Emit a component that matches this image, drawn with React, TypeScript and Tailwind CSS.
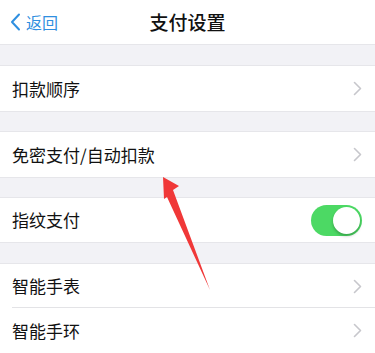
import React from "react";

const Chevron = () => (
  <svg width="9" height="15" viewBox="0 0 9 15" className="shrink-0">
    <path d="M1.5 1.5 L7.5 7.5 L1.5 13.5" fill="none" stroke="#c7c7cc" strokeWidth="1.6" strokeLinecap="round" strokeLinejoin="round" />
  </svg>
);

const Row = ({ label, chevron = true, children, border = false, h = "h-[45px]" }: { label: string; chevron?: boolean; children?: React.ReactNode; border?: boolean; h?: string }) => (
  <div className={`relative flex ${h} items-center bg-white pl-3 pr-[13px]`}>
    <span className="flex-1 text-[17px] text-[#111]">{label}</span>
    {chevron ? <Chevron /> : children}
    {border && <div className="absolute bottom-0 left-3 right-0 h-px bg-[#e3e3e6]" />}
  </div>
);

const Gap = ({ h = "h-[21px]" }: { h?: string }) => <div className={`${h} border-y border-[#e6e6ea] bg-[#f2f2f6]`} />;

export default function App() {
  return (
    <div className="relative h-[353px] w-[375px] overflow-hidden bg-[#f2f2f6]" style={{ fontFamily: '"Noto Sans CJK SC", "Noto Sans", sans-serif' }}>
      <div className="relative flex h-[44px] items-center bg-white">
        <div className="flex items-center pl-[10px] text-[16px] text-[#2f8fe0]">
          <svg width="11" height="18" viewBox="0 0 11 18" className="mr-[5px]">
            <path d="M9 1.5 L2 9 L9 16.5" fill="none" stroke="#2f8fe0" strokeWidth="2" strokeLinecap="round" strokeLinejoin="round" />
          </svg>
          <span>返回</span>
        </div>
        <div className="absolute left-0 right-0 text-center text-[19px] font-medium text-[#111]">支付设置</div>
      </div>
      <Gap h="h-[22px]" />
      <Row label="扣款顺序" />
      <Gap />
      <Row label="免密支付/自动扣款" />
      <Gap />
      <Row label="指纹支付" chevron={false} h="h-[44px]">
        <div className="flex h-[31px] w-[51px] items-center justify-end rounded-full bg-[#4cd964] p-[2px]">
          <div className="h-[27px] w-[27px] rounded-full bg-white shadow-[0_2px_3px_rgba(0,0,0,0.25)]" />
        </div>
      </Row>
      <Gap h="h-[22px]" />
      <Row label="智能手表" border h="h-[44px]" />
      <Row label="智能手环" />
      <svg className="pointer-events-none absolute left-0 top-0" width="375" height="353">
        <polygon points="163,177 179,186 173,190 210,290 167,197 164,199" fill="#f03838" />
      </svg>
    </div>
  );
}
